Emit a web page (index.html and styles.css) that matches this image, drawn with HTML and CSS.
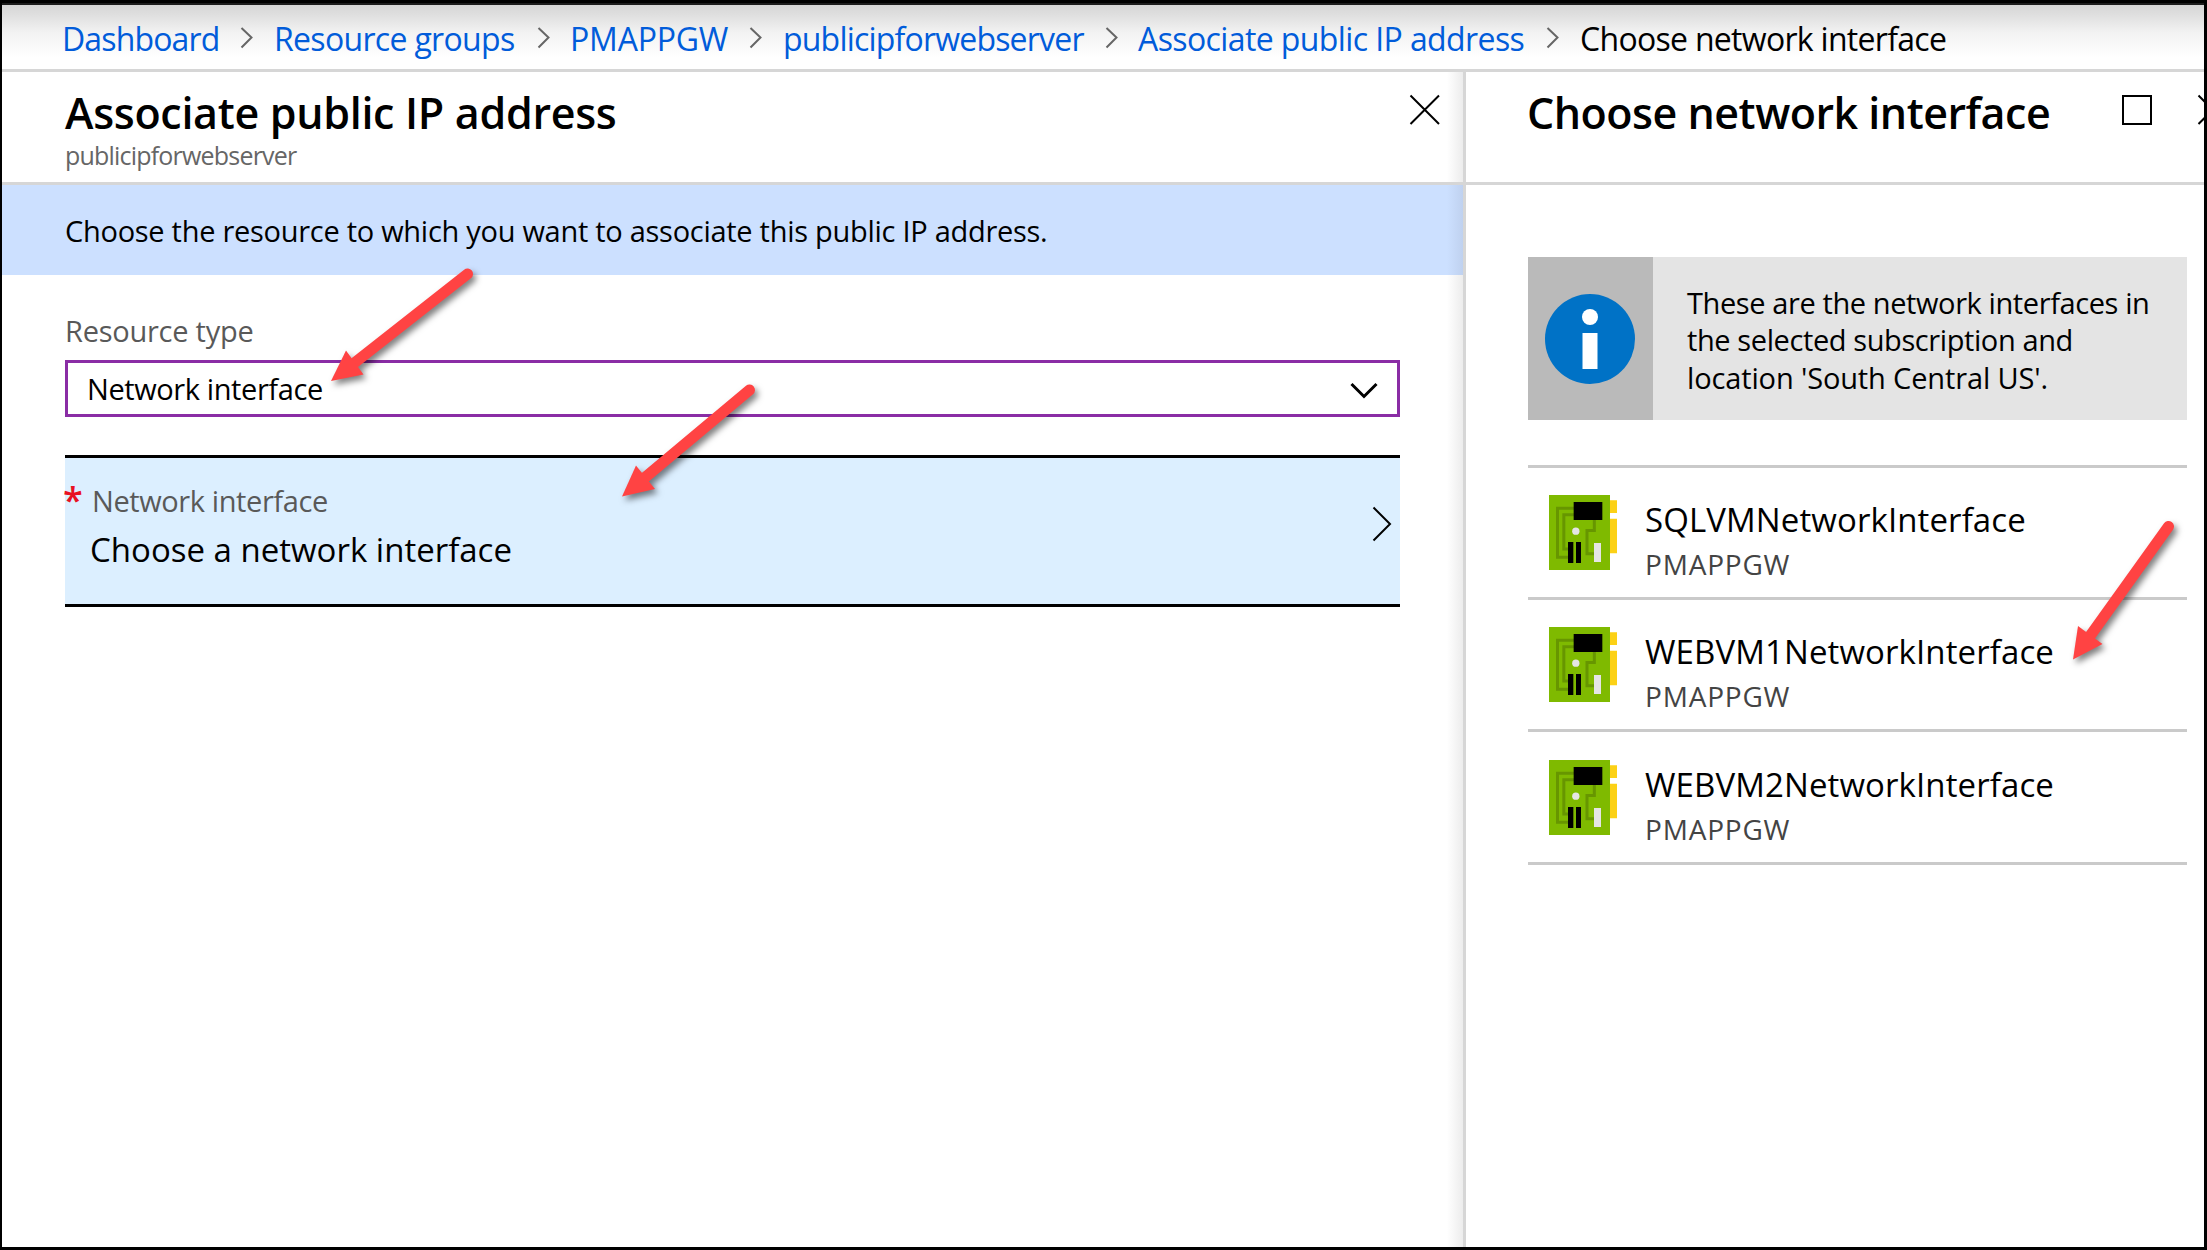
FILE: index.html
```html
<!DOCTYPE html>
<html lang="en">
<head>
<meta charset="utf-8">
<title>Choose network interface</title>
<link rel="stylesheet" href="styles.css">
</head>
<body>
<svg class="sprite" aria-hidden="true">
  <symbol id="sep" viewBox="0 0 14 24"><path d="M1.5 2 11.5 11.5 1.5 21.5" fill="none" stroke="#666" stroke-width="2"/></symbol>
  <symbol id="close" viewBox="0 0 32 32"><path d="M1.5 1.5 30 30M30 1.5 1.5 30" fill="none" stroke="#000" stroke-width="2"/></symbol>
  <symbol id="nic" viewBox="27 30 204 225">
    <path fill="#fcd116" d="M209 46h22v38h-22zM209 101h22v104h-22z"/>
    <path fill="#7fba00" d="M27 30h183v225H27z"/>
    <path fill="none" stroke="#679600" stroke-width="9" d="M102 70H52.500V217H86M102 89H71.500V192H86M163 104V136.500H141V206H163"/>
    <path fill="#000" d="M101 51h86v54h-86zM84 171h16v63H84zM108 171h15v63h-15z"/>
    <path fill="#e5e5e5" d="M162 174h21v57h-21z"/>
    <circle cx="107.500" cy="138.500" r="11" fill="#e5e5e5"/>
  </symbol>
</svg>
<div class="window">
  <nav class="crumbs">
    <a class="crumb c1">Dashboard</a><svg class="sep"><use href="#sep"/></svg>
    <a class="crumb c2">Resource groups</a><svg class="sep"><use href="#sep"/></svg>
    <a class="crumb c3">PMAPPGW</a><svg class="sep"><use href="#sep"/></svg>
    <a class="crumb c4">publicipforwebserver</a><svg class="sep"><use href="#sep"/></svg>
    <a class="crumb c5">Associate public IP address</a><svg class="sep"><use href="#sep"/></svg>
    <span class="crumb current">Choose network interface</span>
  </nav>
  <main class="blades">
    <section class="blade associate">
      <header class="blade-head">
        <div>
          <h1 class="title">Associate public IP address</h1>
          <p class="subtitle">publicipforwebserver</p>
        </div>
        <svg class="close"><use href="#close"/></svg>
      </header>
      <p class="banner">Choose the resource to which you want to associate this public IP address.</p>
      <div class="form">
        <div class="label">Resource type</div>
        <div class="select">
          <span>Network interface</span>
          <svg class="down" viewBox="0 0 28 18"><path d="M1.500 2 14 14.500 26.500 2" fill="none" stroke="#000" stroke-width="3"/></svg>
        </div>
        <div class="picker">
          <span class="star">*</span>
          <div class="picker-text">
            <div class="picker-label">Network interface</div>
            <div class="picker-value">Choose a network interface</div>
          </div>
          <svg class="right" viewBox="0 0 20 36"><path d="M1.500 1.500 18 18 1.500 34.500" fill="none" stroke="#000" stroke-width="2"/></svg>
        </div>
      </div>
    </section>
    <section class="blade choose">
      <header class="blade-head">
        <h2 class="title">Choose network interface</h2>
        <span class="maximize"></span>
        <svg class="close"><use href="#close"/></svg>
      </header>
      <div class="content">
        <div class="info">
          <div class="info-icon">
            <svg width="90" height="90" viewBox="0 0 90 90"><circle cx="45" cy="45" r="45" fill="#0072c6"/><circle cx="45" cy="23" r="8" fill="#fff"/><path d="M37.500 39h15v36h-15z" fill="#fff"/></svg>
          </div>
          <p class="info-text"><span>These are the network interfaces in</span><br><span>the selected subscription and</span><br><span class="last">location 'South Central US'.</span></p>
        </div>
        <ul class="list">
          <li class="row"><svg class="nic"><use href="#nic"/></svg><div><div class="name">SQLVMNetworkInterface</div><div class="group">PMAPPGW</div></div></li>
          <li class="row"><svg class="nic"><use href="#nic"/></svg><div><div class="name">WEBVM1NetworkInterface</div><div class="group">PMAPPGW</div></div></li>
          <li class="row"><svg class="nic"><use href="#nic"/></svg><div><div class="name">WEBVM2NetworkInterface</div><div class="group">PMAPPGW</div></div></li>
        </ul>
      </div>
    </section>
  </main>
  <svg class="arrows" viewBox="0 0 2207 1250" aria-hidden="true">
    <g fill="#ff4343" stroke="#ff4343">
      <path stroke-width="11" stroke-linecap="round" d="M467.500 274 353 364"/>
      <path stroke="none" d="M331 381 346 350.500 363.500 374.500z"/>
      <path stroke-width="11" stroke-linecap="round" d="M749.500 390 645 477.500"/>
      <path stroke="none" d="M622 496.500 636 465.500 655 489z"/>
      <path stroke-width="11" stroke-linecap="round" d="M2168.500 526.500 2090 636"/>
      <path stroke="none" d="M2073 659.500 2078 626 2102.500 644z"/>
    </g>
  </svg>
</div>
</body>
</html>
```
FILE: styles.css
```css
* { box-sizing: border-box; }
body { margin: 0; font-family: "Open Sans", "Noto Sans", sans-serif; color: #000; background: #fff; }
h1, h2, p, ul { margin: 0; padding: 0; }
svg { display: block; flex: none; }
.sprite { position: absolute; width: 0; height: 0; }

.window {
  position: relative;
  display: flex;
  flex-direction: column;
  width: 2207px;
  height: 1250px;
  overflow: hidden;
  border: solid #000;
  border-width: 3px 3px 3px 2px;
}

.crumbs {
  display: flex;
  align-items: center;
  flex: none;
  height: 69px;
  padding: 3px 0 0 60px;
  border-top: 2px solid #1c1c1c;
  border-bottom: 3px solid #d6d6d6;
  background: linear-gradient(#d6d6d6 0, #dedede 9px, #f3f3f3 28px, #fff 52px);
}
.crumb { flex: none; font-size: 32px; line-height: 44px; letter-spacing: -.68px; white-space: nowrap; color: #015cda; }
.crumb.current { color: #000; letter-spacing: -.7px; }
.c1 { width: 178px; letter-spacing: -.85px; }
.c2 { width: 263px; }
.c3 { width: 179px; letter-spacing: -.2px; margin-left: -1px; }
.c4 { width: 322px; letter-spacing: -.8px; }
.c5 { width: 408px; letter-spacing: -.6px; }
.sep { width: 14px; height: 24px; margin: 0 20px 2px 0; }
.c4 + .sep { margin-right: 19px; }

.blades { display: flex; flex: 1; min-height: 0; }
.blade { display: flex; flex-direction: column; flex: none; }
.associate { width: 1461px; background: linear-gradient(to left, #ececec, #fff 16px); }
.choose { width: 741px; overflow: hidden; border-left: 3px solid #d6d6d6; }

.blade-head {
  display: flex;
  align-items: flex-start;
  flex: none;
  height: 113px;
  padding: 11px 22px 0 63px;
  border-bottom: 3px solid #d6d6d6;
}
.title { flex: none; font-size: 43px; line-height: 60px; font-weight: 600; letter-spacing: -.3px; white-space: nowrap; }
.subtitle { margin-top: -5px; font-size: 25px; line-height: 34px; letter-spacing: -.8px; color: #666; }
.close { width: 32px; height: 32px; margin: 11px 0 0 auto; }

.banner {
  flex: none;
  height: 90px;
  padding-left: 63px;
  font-size: 29px;
  line-height: 92px;
  letter-spacing: -.28px;
  background: linear-gradient(to left, #bfd1ef, #cce0ff 16px);
}
.form { padding: 36px 63px 0; }
.label { font-size: 29px; line-height: 40px; letter-spacing: -.25px; color: #595959; }
.select {
  display: flex;
  align-items: center;
  justify-content: space-between;
  height: 57px;
  margin-top: 9px;
  padding: 0 19px;
  border: 3px solid #8a2da5;
  background: #fff;
  font-size: 29px;
  letter-spacing: -.4px;
}
.down { width: 28px; height: 18px; margin-top: 4px; }
.picker {
  display: flex;
  height: 152px;
  margin-top: 38px;
  border: solid #000;
  border-width: 3px 0;
  background: #dcefff;
}
.star { width: 29px; margin-left: -2px; padding-top: 20px; font-size: 36px; line-height: 44px; font-weight: 600; color: #e81123; }
.picker-text { flex: 1; padding-top: 23px; }
.picker-label { font-size: 29px; line-height: 40px; letter-spacing: -.4px; color: #595959; }
.picker-value { margin: 7px 0 0 -2px; font-size: 33px; line-height: 44px; }
.right { width: 20px; height: 36px; margin: 48px 8px 0 0; }

.choose .blade-head { padding: 11px 0 0 61px; }
.choose .title { width: 595px; letter-spacing: -.49px; }
.maximize { flex: none; width: 30px; height: 30px; margin-top: 12px; border: 2px solid #000; }
.choose .close { margin-left: 45px; }

.content { width: 721px; padding: 72px 0 0 62px; }
.info { display: flex; height: 163px; background: #e4e4e4; }
.info-icon { display: flex; align-items: center; justify-content: center; width: 125px; padding-right: 1px; background: #bababa; }
.info-text { padding: 27px 0 0 34px; font-size: 29px; line-height: 37.3px; letter-spacing: -.4px; white-space: nowrap; }
.last { letter-spacing: -.14px; }

.list { margin-top: 45px; border-top: 3px solid #cacaca; list-style: none; }
.row { display: flex; height: 132px; padding: 27px 0 0 21px; border-bottom: 3px solid #cacaca; }
.row:last-child { height: 133px; padding-top: 28px; }
.nic { width: 68px; height: 75px; margin-right: 28px; }
.name { margin-top: 3px; font-size: 33px; line-height: 44px; letter-spacing: .1px; }
.group { margin-top: 2px; font-size: 28px; line-height: 40px; letter-spacing: .8px; color: #444; }

/* Annotation arrows lie over both blades */
.arrows { position: absolute; left: -2px; top: -3px; width: 2207px; height: 1250px; pointer-events: none; filter: drop-shadow(3px 4px 3px rgba(0, 0, 0, .5)); }
```
